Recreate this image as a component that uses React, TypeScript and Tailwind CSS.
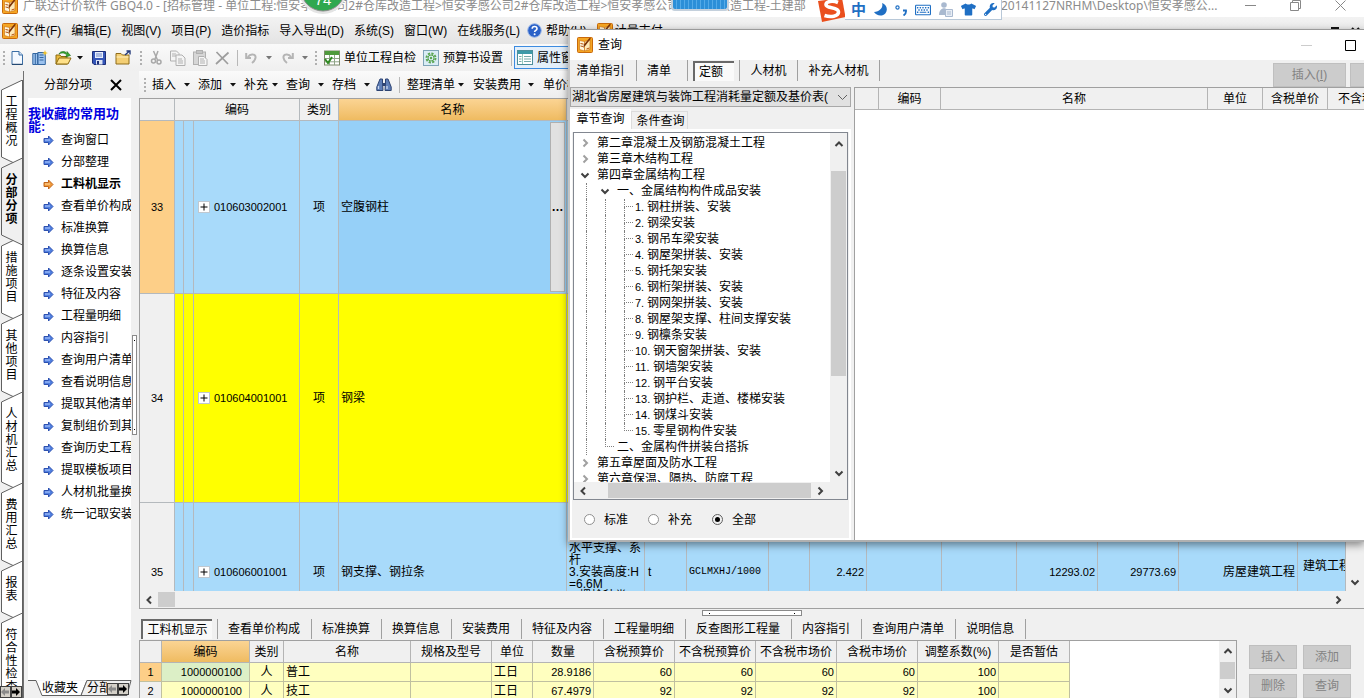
import React from "react";
import { FaTshirt, FaWrench, FaRegKeyboard } from "react-icons/fa";

/* ---------- small drawings ---------- */

function AppIcon() {
  return (
    <svg width="16" height="16" viewBox="0 0 16 16" className="shrink-0">
      <rect x="0.5" y="0.5" width="15" height="15" rx="1" fill="#f5a623" stroke="#c8690c" />
      <path d="M2.500 3.500l5 1v9.500L2.500 12.500z" fill="#fff6dc" stroke="#c8690c" strokeWidth=".6" />
      <path d="M7.500 4.500l5.500-1.500v9.500L7.500 14z" fill="#fde9b8" stroke="#c8690c" strokeWidth=".6" />
      <path d="M3.500 6.500l3 .6M3.500 9l2.500.5M9.500 12l3-1" stroke="#b5500c" />
      <path d="M14 1.500L8.500 8.500 6 11l1-3.500L12.500 1z" fill="#7c3206" />
    </svg>
  );
}

function Chevron({ dir, color = "#404040" }: { dir: "up" | "down" | "left" | "right"; color?: string }) {
  const d = {
    up: "M2.5 8L6 4.5 9.5 8",
    down: "M2.5 4.5L6 8l3.5-3.5",
    left: "M8 2.5L4.5 6 8 9.5",
    right: "M4.5 2.5L8 6 4.5 9.5",
  }[dir];
  return (
    <svg width="12" height="12" viewBox="0 0 12 12" className="shrink-0">
      <path d={d} fill="none" stroke={color} strokeWidth="2" />
    </svg>
  );
}

function Caret({ gray }: { gray?: boolean }) {
  return (
    <svg width="6" height="4" viewBox="0 0 6 4" className="shrink-0">
      <path d="M0 0h6L3 3.6z" fill={gray ? "#777" : "#111"} />
    </svg>
  );
}

function Grip() {
  return (
    <svg width="3" height="16" viewBox="0 0 3 16" className="shrink-0">
      {[1, 5, 9, 13].map((y) => (
        <rect key={y} x="0" y={y} width="2" height="2" fill="#b0b0b0" />
      ))}
    </svg>
  );
}

function LinkArrow({ hot }: { hot?: boolean }) {
  return (
    <svg width="11" height="11" viewBox="0 0 11 11" className="shrink-0">
      <path
        d="M1 3.5h4.5V1L10 5.5 5.5 10V7.5H1z"
        fill={hot ? "#f09a3a" : "#4f7fe0"}
        stroke={hot ? "#c0651a" : "#2c50b0"}
        strokeWidth="1"
      />
      <path d="M2 5h5" stroke={hot ? "#ffd9a0" : "#b5cdff"} />
    </svg>
  );
}

function NewIcon() {
  return (
    <svg width="12" height="14" viewBox="0 0 12 14">
      <path d="M1 .5h7L11.5 4v9.5H1z" fill="#f4f9ff" stroke="#3b6ea5" />
      <path d="M8 .5V4h3.5" fill="#cfe0f5" stroke="#3b6ea5" />
      <path d="M1 13.3h10.5" stroke="#1e3f66" />
    </svg>
  );
}

function NewProjectIcon() {
  return (
    <svg width="16" height="16" viewBox="0 0 16 16">
      <path d="M.8 3.5h5v11h-5zM5.8 2.5h7.5v12H5.8z" fill="#9cc2ee" stroke="#33669f" />
      <path d="M7.5 5h4M7.5 7.5h4M7.5 10h4M3.3 4v10" stroke="#33669f" />
      <path d="M13 0l.8 2.2L16 3l-2.2.8L13 6l-.8-2.2L10 3l2.2-.8z" fill="#f6c628" />
    </svg>
  );
}

function OpenIcon() {
  return (
    <svg width="17" height="16" viewBox="0 0 17 16">
      <path d="M1 14V5h4l1 1.5h6V14z" fill="#e9b93c" stroke="#8c6a10" />
      <path d="M1 14l3-6h12l-3 6z" fill="#ffe189" stroke="#8c6a10" />
      <path d="M4 4c1-3 6-3.500 8-.5V1.500l3.500 4-5 1.500 1.200-2C9.500 2.500 6.500 2.500 4 4z" fill="#37a832" stroke="#1c6b1a" strokeWidth=".6" />
    </svg>
  );
}

function SaveIcon() {
  return (
    <svg width="14" height="14" viewBox="0 0 14 14">
      <path d="M.5.5h13v13H2l-1.500-1.500z" fill="#3455b8" stroke="#1d2f78" />
      <rect x="3" y="1" width="8" height="6" fill="#e8eefb" />
      <path d="M4 3h6M4 5h6" stroke="#6d86c8" />
      <rect x="4" y="9" width="6.500" height="4.500" fill="#dce3f3" />
      <rect x="5" y="10" width="2" height="3.500" fill="#1d2f78" />
    </svg>
  );
}

function FolderIcon() {
  return (
    <svg width="17" height="15" viewBox="0 0 17 15">
      <path d="M1 14V3.500h5L7.500 5H14v9z" fill="#f4cf74" stroke="#8f6c1b" />
      <path d="M1.500 7h12" stroke="#fff0bf" />
      <path d="M10 5l4-3.500M11.500 1H15v3.500" fill="none" stroke="#243a7a" strokeWidth="1.400" />
    </svg>
  );
}

function CutIcon() {
  return (
    <svg width="13" height="16" viewBox="0 0 13 16" fill="none" stroke="#a8a8a8" strokeWidth="1.500">
      <path d="M3.500 1l4 9M8 1L5 9" />
      <circle cx="3.500" cy="11" r="2" />
      <circle cx="9" cy="12" r="2" />
    </svg>
  );
}

function CopyIcon() {
  return (
    <svg width="16" height="16" viewBox="0 0 16 16" fill="#f4f4f4" stroke="#b0b0b0">
      <path d="M.5 1h6l2.500 2.500V11H.5z" />
      <path d="M6 5h6l3 3v7.500H6z" />
      <path d="M2 4h4M2 6h4M8 9h4M8 11h5M8 13h5" />
    </svg>
  );
}

function PasteIcon() {
  return (
    <svg width="15" height="16" viewBox="0 0 15 16" stroke="#b0b0b0">
      <rect x=".5" y="2" width="12" height="12.500" fill="#d6d6d6" />
      <rect x="3.500" y=".5" width="6" height="3" fill="#c4c4c4" />
      <path d="M5.500 6.500h5.500l3 3v6H5.500z" fill="#f6f6f6" />
      <path d="M7 9h4M7 11h5M7 13h5" />
    </svg>
  );
}

function DeleteIcon() {
  return (
    <svg width="15" height="14" viewBox="0 0 15 14">
      <path d="M1.500 1L13 13M13.500 1.500L1 13" stroke="#9d9d9d" strokeWidth="1.700" />
    </svg>
  );
}

function UndoIcon({ flip }: { flip?: boolean }) {
  return (
    <svg width="13" height="12" viewBox="0 0 13 12">
      <path
        d={flip ? "M6 11C2 8 1 3 5 2.500c3-.5 4 .8 5 2.500M11.800 1v5H7" : "M7 11c4-3 5-8 1-8.500C5 2 4 3.300 3 5M1.200 1v5H6"}
        fill="none"
        stroke="#b5b5b5"
        strokeWidth="2"
      />
    </svg>
  );
}

function CheckTableIcon() {
  return (
    <svg width="16" height="16" viewBox="0 0 16 16">
      <rect x=".5" y="1" width="15" height="14" fill="#fff" stroke="#7c8a6a" />
      <rect x="1" y="1" width="14" height="4" fill="#4f9a3c" />
      <path d="M1 8.500h14M1 11.800h14M5.500 5v10M10.500 5v10" stroke="#8fa487" />
      <path d="M1 9l3 4 4-6" fill="none" stroke="#2f8a22" strokeWidth="2" />
    </svg>
  );
}

function GearBookIcon() {
  return (
    <svg width="16" height="16" viewBox="0 0 16 16">
      <rect x=".5" y=".5" width="15" height="15" fill="#d9ecf5" stroke="#7fa4b8" />
      <circle cx="8" cy="8" r="4.500" fill="none" stroke="#5aa552" strokeWidth="2" strokeDasharray="2.200 1.300" />
      <circle cx="8" cy="8" r="3" fill="none" stroke="#5aa552" />
      <circle cx="8" cy="8" r="1.200" fill="#5aa552" />
    </svg>
  );
}

function PropIcon() {
  return (
    <svg width="16" height="15" viewBox="0 0 16 15">
      <rect x=".5" y=".5" width="15" height="14" fill="#fff" stroke="#4d8f9b" />
      <rect x="1" y="1" width="14" height="3" fill="#3e9aa8" />
      <path d="M5.500 4v10" stroke="#9cb" />
      <path d="M2 6.500h2.500M2 9h2.500M2 11.500h2.500M7 6.500h7M7 9h7M7 11.500h7" stroke="#7aa" />
    </svg>
  );
}

function Binoculars() {
  return (
    <svg width="16" height="14" viewBox="0 0 16 14">
      <path d="M4 1h2.500v3L7 12.500H.8V9z" fill="#5f7fb8" stroke="#2d4372" />
      <path d="M12 1H9.500v3L9 12.500h6.200V9z" fill="#5f7fb8" stroke="#2d4372" />
      <path d="M6.500 5h3v3h-3z" fill="#2d4372" />
      <path d="M2.500 8v3M11 8v3" stroke="#c9d8f2" strokeWidth="1.300" />
    </svg>
  );
}

function HelpIcon() {
  return (
    <svg width="15" height="15" viewBox="0 0 15 15">
      <circle cx="7.500" cy="7.500" r="6.800" fill="#2b62c8" stroke="#9ab6e6" />
      <path d="M5.200 5.800c0-3 4.800-3 4.800 0 0 1.600-2.400 1.700-2.400 3.300" fill="none" stroke="#fff" strokeWidth="1.600" />
      <circle cx="7.600" cy="11.300" r="1" fill="#fff" />
    </svg>
  );
}

/* ---------- shared parts ---------- */

function GrayButton({ children, className = "" }: { children?: React.ReactNode; className?: string }) {
  return (
    <button
      disabled
      className={"h-6 shrink-0 border border-[#bfbfbf] bg-[#cccccc] text-center whitespace-nowrap text-[#838383] " + className}
    >
      {children}
    </button>
  );
}

function Sep() {
  return <span className="h-4 w-px shrink-0 bg-[#b8b8b8]" />;
}

/* ---------- title, menu, toolbars ---------- */

function TitleBar() {
  return (
    <header className="relative h-[17px] shrink-0 overflow-hidden bg-white font-['Noto_Sans','Noto_Sans_CJK_SC',sans-serif] text-[#8c8c8c]">
      <div className="flex h-[11px] items-center whitespace-nowrap">
        <span className="flex w-[23px] shrink-0 pl-[2px]">
          <AppIcon />
        </span>
        <span className="w-[978px] shrink-0">
          广联达计价软件 GBQ4.0 - [招标管理 - 单位工程:恒安孝感公司2#仓库改造工程&gt;恒安孝感公司2#仓库改造工程&gt;恒安孝感公司2#仓库改造工程-土建部
        </span>
        <span>20141127NRHM\Desktop\恒安孝感公...</span>
        <span className="ml-auto flex items-center gap-[34px] pr-[18px]">
          <button aria-label="最小化" className="flex">
            <svg width="11" height="11" viewBox="0 0 11 11"><path d="M0 5.500h11" stroke="#888" /></svg>
          </button>
          <button aria-label="还原" className="flex">
            <svg width="11" height="11" viewBox="0 0 11 11" fill="none" stroke="#888"><path d="M.5 2.500h8v8h-8zM2.500 2.500v-2h8v8h-2" /></svg>
          </button>
          <button aria-label="关闭" className="flex">
            <svg width="11" height="11" viewBox="0 0 11 11" stroke="#888"><path d="M.5.5l10 10M10.500.5l-10 10" /></svg>
          </button>
        </span>
      </div>
    </header>
  );
}

const menus = ["文件(F)", "编辑(E)", "视图(V)", "项目(P)", "造价指标", "导入导出(D)", "系统(S)", "窗口(W)", "在线服务(L)"];

function MenuBar() {
  return (
    <nav className="flex h-[27px] shrink-0 items-center gap-[10px] overflow-hidden bg-linear-to-b from-[#f2f2f2] to-[#e4e4e4] pl-[2px] whitespace-nowrap">
      <span className="-mr-[6px] flex">
        <AppIcon />
      </span>
      {menus.map((m) => (
        <button key={m}>{m}</button>
      ))}
      <button className="-ml-[3px] flex items-center gap-1">
        <HelpIcon />
        帮助(H)
      </button>
      <button className="flex items-center gap-[2px]">
        <AppIcon />
        计量支付
      </button>
      <span className="ml-auto flex gap-3 pr-1">
        <svg width="8" height="8" viewBox="0 0 8 8"><path d="M1 8V1h6v7" fill="none" stroke="#111" strokeWidth="2" /></svg>
        <svg width="9" height="8" viewBox="0 0 9 8"><path d="M1 1l7 7M8 1L1 8" stroke="#111" strokeWidth="2" /></svg>
      </span>
    </nav>
  );
}

function ToolBar() {
  return (
    <div className="flex h-[27px] shrink-0 items-center overflow-hidden bg-linear-to-b from-[#fafafa] to-[#efefef] pl-[3px] whitespace-nowrap">
      <Grip />
      <div className="ml-[5px] flex items-center gap-[9px]">
        <button aria-label="新建"><NewIcon /></button>
        <button aria-label="新建项目"><NewProjectIcon /></button>
        <button aria-label="打开" className="-ml-[2px] flex items-center gap-[5px]"><OpenIcon /><Caret /></button>
        <button aria-label="保存"><SaveIcon /></button>
        <button aria-label="文件夹"><FolderIcon /></button>
      </div>
      <div className="ml-2 flex items-center gap-[7px]">
        <Grip />
        <button aria-label="剪切"><CutIcon /></button>
        <button aria-label="复制"><CopyIcon /></button>
        <button aria-label="粘贴"><PasteIcon /></button>
        <button aria-label="删除"><DeleteIcon /></button>
        <Sep />
        <button aria-label="撤销" className="flex items-center gap-2"><UndoIcon /><Caret gray /></button>
        <button aria-label="恢复" className="ml-[2px] flex items-center gap-2"><UndoIcon flip /><Caret gray /></button>
        <Grip />
      </div>
      <button className="ml-[6px] flex items-center gap-1"><CheckTableIcon />单位工程自检</button>
      <button className="ml-[7px] flex items-center gap-1"><GearBookIcon />预算书设置</button>
      <span className="ml-2 flex"><Sep /></span>
      <button className="ml-[2px] flex h-[23px] items-center gap-1 border border-[#3c8be0] bg-[#e4effa] px-[2px]">
        <PropIcon />属性窗口
      </button>
    </div>
  );
}

const gridTools = [
  { t: "插入", w: "w-[38px]" },
  { t: "添加", w: "w-[38px]" },
  { t: "补充", w: "w-[34px]" },
  { t: "查询", w: "w-[38px]" },
  { t: "存档", w: "w-[38px]" },
];

function GridToolBar() {
  return (
    <div className="flex h-[27px] shrink-0 items-center overflow-hidden bg-linear-to-b from-[#fafafa] to-[#eeeeee] pl-[5px] whitespace-nowrap">
      <Grip />
      <div className="ml-[5px] flex items-center gap-2">
        {gridTools.map((g) => (
          <button key={g.t} className={"flex items-center justify-between " + g.w}>
            {g.t}
            <Caret />
          </button>
        ))}
      </div>
      <button aria-label="查找" className="ml-[6px]"><Binoculars /></button>
      <span className="mx-[7px] flex"><Sep /></span>
      <button className="flex items-center gap-[3px]">整理清单<Caret /></button>
      <button className="ml-[9px] flex items-center gap-[7px]">安装费用<Caret /></button>
      <button className="ml-[9px]">单价构成</button>
    </div>
  );
}

/* ---------- left side ---------- */

const sideTabs = ["工程概况", "分部分项", "措施项目", "其他项目", "人材机汇总", "费用汇总", "报表", "符合性检查"];

function SideTabs() {
  return (
    <div className="relative flex w-6 shrink-0 flex-col overflow-hidden border-r border-[#707070] bg-[#f0f0f0] pt-[9px]">
      {sideTabs.map((t) => {
        const active = t === "分部分项";
        const h = t.length * 13 + 26;
        return (
          <button
            key={t}
            className={
              "relative flex w-[23px] shrink-0 flex-col items-center pt-4 pb-[10px] leading-[13px] " +
              (active ? "z-10 font-bold" : "")
            }
          >
            <svg width="23" height={h + 10} viewBox={`0 0 23 ${h + 10}`} className="absolute top-0 left-0">
              <path
                d={`M22.500 0L1.500 10V${h - 1}L22.500 ${h + 9}z`}
                fill={active ? "#f0f0f0" : "#ffffff"}
                stroke="#606060"
              />
            </svg>
            {[...t].map((c, i) => (
              <span key={i} className="relative block">{c}</span>
            ))}
          </button>
        );
      })}
      <div className="absolute bottom-0 left-0 z-20 flex">
        <MiniArrow dir="left" />
        <MiniArrow dir="right" />
      </div>
    </div>
  );
}

function MiniArrow({ dir }: { dir: "left" | "right" }) {
  return (
    <button aria-label={dir === "left" ? "向前" : "向后"} className="flex h-3 w-[11px] items-center justify-center border border-[#404040] bg-[#d4d0c8]">
      <svg width="9" height="8" viewBox="0 0 9 8">
        <path
          d={dir === "left" ? "M0 4l4-4v2.500h4v3H4V8z" : "M8 4L4 0v2.500H0v3h4V8z"}
          fill={dir === "left" ? "#8a8a8a" : "#000"}
        />
      </svg>
    </button>
  );
}

const links = [
  "查询窗口", "分部整理", "工料机显示", "查看单价构成", "标准换算", "换算信息", "逐条设置安装费用", "特征及内容", "工程量明细",
  "内容指引", "查询用户清单", "查看说明信息", "提取其他清单", "复制组价到其他", "查询历史工程", "提取模板项目", "人材机批量换算", "统一记取安装费",
];

function SidePanel() {
  return (
    <aside className="flex w-[115px] shrink-0 flex-col">
      <div className="flex h-[27px] shrink-0 items-center pl-5">
        分部分项
        <button aria-label="关闭" className="ml-[18px]">
          <svg width="12" height="12" viewBox="0 0 12 12"><path d="M1 1l10 10M11 1L1 11" stroke="#000" strokeWidth="2" /></svg>
        </button>
      </div>
      <div className="flex min-h-0 flex-1">
        <div className="ml-1 w-[103px] shrink-0 overflow-hidden bg-white pt-[9px]">
          <h2 className="h-[22px] text-[13px] leading-[13px] font-bold text-[#0000e0]">我收藏的常用功能:</h2>
          <ul className="whitespace-nowrap">
            {links.map((l) => (
              <li key={l} className="h-[22px]">
                <a href="#" className={"flex h-full items-center gap-[7px] pl-[15px] " + (l === "工料机显示" ? "font-bold" : "")}>
                  <LinkArrow hot={l === "工料机显示"} />
                  {l}
                </a>
              </li>
            ))}
          </ul>
        </div>
        <div className="flex w-[6px] flex-col pt-[237px] pl-px">
          <span className="flex h-[100px] w-[5px] flex-col items-center justify-between border border-[#8a8a8a] bg-white py-1">
            <i className="block size-px bg-black" />
            <i className="block size-px bg-black" />
          </span>
        </div>
      </div>
      <div className="relative flex h-[18px] shrink-0 overflow-hidden pl-[18px] whitespace-nowrap">
        <svg width="104" height="17" viewBox="0 0 104 17" className="absolute top-0 left-1">
          <path d="M0 .5h8l6 15h39l6-15" fill="#fff" stroke="#606060" />
          <path d="M53 15.500L59 .5h44l-4 15H53" fill="#f0f0f0" stroke="#606060" />
        </svg>
        <button className="relative h-4 leading-4">收藏夹</button>
        <button className="relative ml-[9px] h-4 w-5 overflow-hidden text-left leading-4">分部</button>
        <span className="relative flex items-start pt-[3px]">
          <MiniArrow dir="left" />
          <MiniArrow dir="right" />
        </span>
      </div>
    </aside>
  );
}

/* ---------- main grid ---------- */

const mainCols = [
  "w-[35px]", "w-[9px]", "w-[10px]", "w-[106px]", "w-[39px]", "w-[228px]", "w-[78px]", "w-[42px]", "w-[82px]", "w-[41px]",
  "w-[57px]", "w-[75px]", "w-[75px]", "w-[81px]", "w-[81px]", "w-[119px]", "",
];

type MainRow = { no: string; code: string; name: string; h: string; bg: string; noBg: string; sel?: boolean; full?: boolean };

const mainRows: MainRow[] = [
  { no: "33", code: "010603002001", name: "空腹钢柱", h: "h-[173px]", bg: "bg-[#a8dafa]", noBg: "bg-[#fdcf88]", sel: true },
  { no: "34", code: "010604001001", name: "钢梁", h: "h-[209px]", bg: "bg-[#ffff00]", noBg: "bg-[#f0f0f0]" },
  { no: "35", code: "010606001001", name: "钢支撑、钢拉条", h: "h-[138px]", bg: "bg-[#a8dafa]", noBg: "bg-[#f0f0f0]", full: true },
];

function MainGrid() {
  const cell = "border-r border-b border-[#b4b9bd] p-0 overflow-hidden";
  const head = "border-r border-b border-[#b4b9bd] p-0 font-normal";
  return (
    <div className="flex min-h-0 flex-1 flex-col border border-r-0 border-[#a0a0a0]">
      <div className="flex min-h-0 flex-1">
        <div className="min-w-0 flex-1 overflow-hidden">
          <table className="w-full table-fixed border-separate border-spacing-0 whitespace-nowrap">
            <colgroup>
              {mainCols.map((c, i) => (
                <col key={i} className={c} />
              ))}
            </colgroup>
            <thead>
              <tr className="h-[22px] bg-[#f0f0f0]">
                <th className={head} />
                <th colSpan={3} className={head}>编码</th>
                <th className={head}>类别</th>
                <th className={head + " bg-linear-to-b from-[#fbd493] to-[#efbb60]"}>名称</th>
                {mainCols.slice(6).map((_, i) => (
                  <th key={i} className={head} />
                ))}
              </tr>
            </thead>
            <tbody>
              {mainRows.map((r) => (
                <tr key={r.no} className={r.h + " " + r.bg}>
                  <td className={cell + " text-center text-[11px] " + r.noBg}>{r.no}</td>
                  <td className={cell} />
                  <td className={cell} />
                  <td className={cell}>
                    <span className="flex items-center gap-1 pl-[4px] text-[11px]">
                      <button aria-label="展开" className="flex size-3 items-center justify-center border border-[#c0c8d0] bg-white">
                        <svg width="8" height="8" viewBox="0 0 8 8"><path d="M4 .5v7M.5 4h7" stroke="#000" /></svg>
                      </button>
                      {r.code}
                    </span>
                  </td>
                  <td className={cell + " text-center"}>项</td>
                  <td className={cell + (r.sel ? " bg-[#96d0f8]" : "")}>
                    <span className={"flex items-center justify-between pl-[2px] " + (r.sel ? "h-[172px] pr-px" : "")}>
                      {r.name}
                      {r.sel && (
                        <button className="h-[170px] w-[15px] border border-[#b0b0b0] bg-[#e1e1e1] text-center font-bold">…</button>
                      )}
                    </span>
                  </td>
                  <td className={cell + " pl-[2px] leading-3"}>
                    {r.full && (
                      <>
                        水平支撑、系<br />杆<br />3.安装高度:H<br />=6.6M<br />4.螺栓种类
                      </>
                    )}
                  </td>
                  <td className={cell + " pl-[3px]"}>{r.full && "t"}</td>
                  <td className={cell + " pl-[2px] font-['Liberation_Mono',monospace] text-[10px]"}>{r.full && "GCLMXHJ/1000"}</td>
                  <td className={cell} />
                  <td className={cell + " pr-[2px] text-right text-[11px]"}>{r.full && "2.422"}</td>
                  <td className={cell} />
                  <td className={cell} />
                  <td className={cell + " pr-[2px] text-right text-[11px]"}>{r.full && "12293.02"}</td>
                  <td className={cell + " pr-[2px] text-right text-[11px]"}>{r.full && "29773.69"}</td>
                  <td className={cell + " pr-[2px] text-right"}>{r.full && "房屋建筑工程"}</td>
                  <td className={cell + " pb-3 pl-[5px]"}>{r.full && "建筑工程"}</td>
                </tr>
              ))}
            </tbody>
          </table>
        </div>
        <div className="flex w-[18px] shrink-0 flex-col items-center justify-end bg-[#f0f0f0] pb-[3px]">
          <Chevron dir="down" />
        </div>
      </div>
      <div className="flex h-[17px] shrink-0 items-center bg-[#f0f0f0] pr-5 pl-[3px]">
        <Chevron dir="left" />
        <span className="ml-[3px] h-[15px] w-[17px] bg-[#cdcdcd]" />
        <span className="ml-auto flex"><Chevron dir="right" /></span>
      </div>
    </div>
  );
}

/* ---------- lower pane ---------- */

const lowerTabs = ["查看单价构成", "标准换算", "换算信息", "安装费用", "特征及内容", "工程量明细", "反查图形工程量", "内容指引", "查询用户清单", "说明信息"];

function LowerTabs() {
  return (
    <div className="flex h-[23px] shrink-0 items-center whitespace-nowrap">
      <div className="flex h-5 w-[79px] shrink-0 border-r border-[#a0a0a0] pl-[2px]">
        <button className="h-5 w-[71px] border-t-2 border-l-2 border-[#696969] bg-[#f8f8f8] leading-[18px]">工料机显示</button>
      </div>
      {lowerTabs.map((t) => (
        <button key={t} className="h-5 border-r border-[#a0a0a0] pr-[11px] pl-[10px]">
          {t}
        </button>
      ))}
    </div>
  );
}

const lowerCols = [
  { t: "", w: "w-[22px]" },
  { t: "编码", w: "w-[88px]" },
  { t: "类别", w: "w-[34px]" },
  { t: "名称", w: "w-[127px]" },
  { t: "规格及型号", w: "w-[81px]" },
  { t: "单位", w: "w-[41px]" },
  { t: "数量", w: "w-[61px]" },
  { t: "含税预算价", w: "w-[81px]" },
  { t: "不含税预算价", w: "w-[81px]" },
  { t: "不含税市场价", w: "w-[81px]" },
  { t: "含税市场价", w: "w-[81px]" },
  { t: "调整系数(%)", w: "w-[81px]" },
  { t: "是否暂估", w: "w-[71px]" },
];

const lowerRows = [
  ["1", "1000000100", "人", "普工", "", "工日", "28.9186", "60", "60", "60", "60", "100", ""],
  ["2", "1000000100", "人", "技工", "", "工日", "67.4979", "92", "92", "92", "92", "100", ""],
];

function LowerPane() {
  return (
    <div className="flex h-[58px] shrink-0">
      <div className="flex min-w-0 flex-1 overflow-hidden border-t border-r border-l border-[#a0a0a0] bg-white">
        <div className="min-w-0 flex-1 overflow-hidden">
          <table className="w-[930px] table-fixed border-separate border-spacing-0 whitespace-nowrap">
            <thead>
              <tr className="h-[22px]">
                {lowerCols.map((c, i) => (
                  <th
                    key={i}
                    className={
                      "border-r border-b border-[#b4b4b4] p-0 font-normal " + c.w +
                      (i === 1 ? " bg-linear-to-b from-[#fbd493] to-[#efbb60]" : " bg-[#f0f0f0]")
                    }
                  >
                    {c.t}
                  </th>
                ))}
              </tr>
            </thead>
            <tbody>
              {lowerRows.map((r, ri) => (
                <tr key={ri} className="h-[19px] bg-[#ffffbf]">
                  {r.map((v, i) => {
                    let k = " px-[2px] text-right text-[11px]";
                    if (i === 0) k = " text-center text-[11px] " + (ri === 0 ? "bg-[#fdcf88]" : "bg-[#f0f0f0]");
                    if (i === 1) k = " pr-[7px] text-right text-[11px]" + (ri === 0 ? " bg-[#dcefc6]" : "");
                    if (i === 2) k = " text-center";
                    if (i === 3 || i === 5) k = " pl-[2px]";
                    return (
                      <td key={i} className={"border-r border-b border-[#c0c0a0] py-0" + k}>{v}</td>
                    );
                  })}
                </tr>
              ))}
            </tbody>
          </table>
        </div>
        <div className="flex w-[17px] shrink-0 flex-col items-center justify-between bg-[#f0f0f0] pt-1 pb-[2px]">
          <Chevron dir="up" />
          <span className="h-[17px] w-[15px] bg-[#cdcdcd]" />
          <Chevron dir="down" />
        </div>
      </div>
      <div className="grid w-[127px] shrink-0 grid-cols-2 content-start gap-x-[6px] gap-y-[5px] pt-[5px] pr-[13px] pl-3">
        <GrayButton>插入</GrayButton>
        <GrayButton>添加</GrayButton>
        <GrayButton>删除</GrayButton>
        <GrayButton>查询</GrayButton>
      </div>
    </div>
  );
}

/* ---------- query dialog ---------- */

type Node = { level: 0 | 1 | 2; text: string; num?: string; open?: boolean; last?: boolean };

const tree: Node[] = [
  { level: 0, text: "第二章混凝土及钢筋混凝土工程" },
  { level: 0, text: "第三章木结构工程" },
  { level: 0, text: "第四章金属结构工程", open: true },
  { level: 1, text: "一、金属结构构件成品安装", open: true },
  { level: 2, num: "1.", text: "钢柱拼装、安装" },
  { level: 2, num: "2.", text: "钢梁安装" },
  { level: 2, num: "3.", text: "钢吊车梁安装" },
  { level: 2, num: "4.", text: "钢屋架拼装、安装" },
  { level: 2, num: "5.", text: "钢托架安装" },
  { level: 2, num: "6.", text: "钢桁架拼装、安装" },
  { level: 2, num: "7.", text: "钢网架拼装、安装" },
  { level: 2, num: "8.", text: "钢屋架支撑、柱间支撑安装" },
  { level: 2, num: "9.", text: "钢檩条安装" },
  { level: 2, num: "10.", text: "钢天窗架拼装、安装" },
  { level: 2, num: "11.", text: "钢墙架安装" },
  { level: 2, num: "12.", text: "钢平台安装" },
  { level: 2, num: "13.", text: "钢护栏、走道、楼梯安装" },
  { level: 2, num: "14.", text: "钢煤斗安装" },
  { level: 2, num: "15.", text: "零星钢构件安装", last: true },
  { level: 1, text: "二、金属构件拼装台搭拆", last: true },
  { level: 0, text: "第五章屋面及防水工程" },
  { level: 0, text: "第六章保温、隔热、防腐工程" },
];

function Elbow({ last, w }: { last?: boolean; w: string }) {
  return (
    <span className={"flex h-4 shrink-0 flex-col " + w}>
      <i className="block h-2 w-[9px] border-b border-l border-dotted border-[#808080]" />
      {!last && <i className="block h-2 border-l border-dotted border-[#808080]" />}
    </span>
  );
}

function TreeRow({ n }: { n: Node }) {
  return (
    <li className="flex h-4 items-center leading-4">
      {n.level === 0 && (
        <span className="flex w-[23px] shrink-0 pl-[5px]">
          <Chevron dir={n.open ? "down" : "right"} color={n.open ? "#404040" : "#a0a0a0"} />
        </span>
      )}
      {n.level > 0 && (
        <span className={"ml-3 block h-4 shrink-0 border-l border-dotted border-[#808080] " + (n.level === 1 && n.open ? "w-[13px]" : "w-[19px]")} />
      )}
      {n.level === 1 && n.open && (
        <span className="flex w-[18px] shrink-0">
          <Chevron dir="down" />
        </span>
      )}
      {n.level === 1 && !n.open && <Elbow last w="w-3" />}
      {n.level === 2 && (
        <>
          <span className="block h-4 w-[19px] shrink-0 border-l border-dotted border-[#808080]" />
          <Elbow last={n.last} w="w-[11px]" />
          <span className={"shrink-0 text-[11px] " + (n.num!.length > 2 ? "w-[18px]" : "w-3")}>{n.num}</span>
        </>
      )}
      <span>{n.text}</span>
    </li>
  );
}

const dialogTabs = [
  { t: "清单指引", w: "w-[67px] pr-[5px]" },
  { t: "清单", w: "w-[51px] pr-[6px]" },
  { t: "定额", w: "w-[52px]" },
  { t: "人材机", w: "w-[58px]" },
  { t: "补充人材机", w: "w-[82px]" },
];

const quotaCols = [
  { t: "", w: "w-[24px]" },
  { t: "编码", w: "w-[62px]" },
  { t: "名称", w: "" },
  { t: "单位", w: "w-[55px]" },
  { t: "含税单价", w: "w-[65px]" },
];

function Dialog() {
  return (
    <section
      aria-label="查询"
      className="absolute top-[29px] right-0 left-[568px] z-30 flex h-[513px] flex-col overflow-hidden border-t border-b-2 border-l-2 border-[#9a9a9a] border-b-[#b0b0b0] border-l-[#c4c4c4] bg-[#f0f0f0] shadow-[0_3px_8px_rgba(0,0,0,0.45)]"
    >
      <div className="flex h-[30px] shrink-0 items-center gap-[5px] bg-white pr-2 pl-[7px]">
        <AppIcon />
        查询
        <button aria-label="最小化" className="ml-auto">
          <svg width="11" height="11" viewBox="0 0 11 11"><path d="M0 5.500h11" stroke="#ccc" /></svg>
        </button>
        <button aria-label="最大化" className="ml-7">
          <svg width="11" height="11" viewBox="0 0 11 11"><path d="M.5.5h10v10H.5z" fill="none" stroke="#000" /></svg>
        </button>
      </div>
      <div className="flex h-[27px] shrink-0 items-start whitespace-nowrap">
        {dialogTabs.map((d) => (
          <span key={d.t} className={"flex h-[21px] shrink-0 items-center justify-center border-r border-[#a0a0a0] " + d.w}>
            <button
              className={
                d.t === "定额"
                  ? "h-5 w-[41px] border-t-2 border-l-2 border-[#696969] bg-[#fafafa] pl-1 text-left leading-[18px]"
                  : ""
              }
            >
              {d.t}
            </button>
          </span>
        ))}
        <span className="mt-[3px] ml-auto flex gap-1">
          <GrayButton className="w-[73px]">插入(<u>I</u>)</GrayButton>
          <GrayButton className="w-[14px] border-r-0" />
        </span>
      </div>
      <div className="flex min-h-0 flex-1">
        <div className="flex w-[281px] shrink-0 flex-col">
          <label className="relative flex h-5 shrink-0">
            <select aria-label="定额库" className="h-5 w-full appearance-none border border-[#a8a8a8] bg-[#e1e1e1] pl-px leading-[18px]">
              <option>湖北省房屋建筑与装饰工程消耗量定额及基价表(</option>
            </select>
            <svg width="11" height="8" viewBox="0 0 11 8" className="absolute top-[7px] right-[3px]">
              <path d="M1 1l4.500 4.500L10 1" fill="none" stroke="#606060" />
            </svg>
          </label>
          <div className="mt-[2px] flex h-5 shrink-0 items-end">
            <button className="h-5 w-[61px] bg-white leading-5">章节查询</button>
            <button className="h-[18px] w-[57px] border border-b-0 border-[#dcdcdc] pl-[2px] leading-[18px]">条件查询</button>
          </div>
          <div className="flex min-h-0 flex-1 flex-col border-2 border-t-[3px] border-white">
            <div className="ml-px mr-px flex h-[368px] shrink-0 flex-col border border-[#828790] bg-white">
              <div className="flex min-h-0 flex-1">
                <ul className="min-w-0 flex-1 overflow-hidden pt-[2px] whitespace-nowrap">
                  {tree.map((n) => (
                    <TreeRow key={n.text} n={n} />
                  ))}
                </ul>
                <div className="flex w-[17px] shrink-0 flex-col items-center bg-[#f0f0f0] pt-[5px] pb-[3px]">
                  <Chevron dir="up" />
                  <span className="mt-[21px] h-[205px] w-[15px] bg-[#cdcdcd]" />
                  <span className="mt-auto flex"><Chevron dir="down" /></span>
                </div>
              </div>
              <div className="flex h-[17px] shrink-0 items-center bg-[#f0f0f0] pr-5 pl-[3px]">
                <Chevron dir="left" />
                <span className="ml-[19px] h-[15px] w-[203px] bg-[#cdcdcd]" />
                <span className="ml-[3px] flex"><Chevron dir="right" /></span>
              </div>
            </div>
            <fieldset className="flex flex-1 items-center gap-5 pt-px pl-3">
              {["标准", "补充", "全部"].map((o) => (
                <label key={o} className="flex items-center gap-[9px]">
                  <input
                    type="radio"
                    name="scope"
                    defaultChecked={o === "全部"}
                    className="size-[11px] appearance-none rounded-full border border-[#909090] bg-white checked:border-[#606060] checked:bg-black checked:bg-clip-content checked:p-[2px]"
                  />
                  {o}
                </label>
              ))}
            </fieldset>
          </div>
        </div>
        <div className="ml-[3px] min-w-0 flex-1 overflow-hidden border-t border-l border-[#a0a0a0] bg-white">
          <table className="w-full table-fixed border-separate border-spacing-0 whitespace-nowrap">
            <thead>
              <tr className="h-[22px] bg-[#f0f0f0]">
                {quotaCols.map((c, i) => (
                  <th key={i} className={"border-r border-b border-[#b4b4b4] p-0 font-normal " + c.w}>{c.t}</th>
                ))}
                <th className="w-[36px] overflow-hidden border-b border-[#b4b4b4] p-0 pl-[10px] text-left font-normal">不含税单价</th>
              </tr>
            </thead>
          </table>
        </div>
      </div>
    </section>
  );
}

/* ---------- floating desktop widgets ---------- */

function InputMethodBar() {
  return (
    <div className="absolute top-0 left-[818px] z-40 flex h-[21px] items-start">
      <svg width="28" height="22" viewBox="0 0 28 22" className="shrink-0">
        <path d="M0 1L24-2l3.500 19L4 22z" fill="#ea4f1d" />
        <path d="M20 2.500C15 .5 8 1 8 4.800c0 4 12.500 2 12.500 7.200 0 4.500-8 5.500-14 3.500" fill="none" stroke="#fff" strokeWidth="3.600" />
      </svg>
      <div className="-ml-px flex h-5 w-[157px] items-center justify-between border-r border-b border-[#b8c8d8] bg-white pr-1 pl-[6px] text-[#1f6fc4]">
        <span className="text-[15px] leading-[18px] font-bold">中</span>
        <svg width="13" height="13" viewBox="0 0 13 13">
          <path d="M8 0c1.500 4-1.500 8.500-8 9 2.500 4 8.500 4.800 11.500 1.200C14.300 6.500 12.500 1.500 8 0z" fill="#1f6fc4" />
        </svg>
        <svg width="12" height="12" viewBox="0 0 12 12">
          <circle cx="2.500" cy="3.500" r="1.600" fill="none" stroke="#1f6fc4" strokeWidth="1.200" />
          <path d="M8 6.500h3c.3 2-.5 3.700-2.500 5" fill="none" stroke="#1f6fc4" strokeWidth="1.800" />
        </svg>
        <FaRegKeyboard size={16} />
        <svg width="14" height="15" viewBox="0 0 14 15" fill="#a9b9cf">
          <circle cx="5" cy="3" r="2.800" />
          <path d="M0 13c0-9 10-9 10 0z" />
          <path d="M6.500 7.500h7v7h-7z" fill="#e8eef6" stroke="#a9b9cf" />
          <path d="M8 10h4M8 12h4" stroke="#a9b9cf" />
        </svg>
        <FaTshirt size={15} />
        <FaWrench size={13} />
      </div>
    </div>
  );
}

function Ball() {
  return (
    <svg width="48" height="16" viewBox="0 0 48 16" className="absolute top-0 left-[299px] z-40">
      <circle cx="24" cy="-10" r="24" fill="#e4e4e4" />
      <circle cx="24" cy="-11" r="22" fill="#2fa84f" stroke="#8a8a8a" />
      <text x="24" y="5" textAnchor="middle" fontSize="15" fill="#fff" fontFamily="Liberation Sans, sans-serif">74</text>
    </svg>
  );
}

function BlueWidget() {
  return (
    <div className="absolute top-0 left-[671px] z-40 h-[11px] w-[58px] rounded-b border-2 border-t-0 border-[#c4d0dc] bg-[repeating-linear-gradient(90deg,#2c8fd8_0px,#2c8fd8_3px,#53aae8_3px,#53aae8_4px)]" />
  );
}

export default function App() {
  return (
    <div className="relative flex h-screen flex-col overflow-hidden bg-[#f0f0f0] font-['Liberation_Sans','Noto_Sans_CJK_SC',sans-serif] text-[12px] leading-[16px] text-black">
      <TitleBar />
      <MenuBar />
      <ToolBar />
      <div className="flex min-h-0 flex-1">
        <SideTabs />
        <SidePanel />
        <main className="flex min-w-0 flex-1 flex-col">
          <GridToolBar />
          <MainGrid />
          <div className="flex h-2 shrink-0 items-center justify-center">
            <span className="flex h-[6px] w-[100px] items-center justify-between border border-[#8a8a8a] bg-white px-[6px]">
              <i className="block size-px bg-black" />
              <i className="block size-px bg-black" />
            </span>
          </div>
          <LowerTabs />
          <LowerPane />
        </main>
      </div>
      <Dialog />
      <Ball />
      <BlueWidget />
      <InputMethodBar />
    </div>
  );
}
